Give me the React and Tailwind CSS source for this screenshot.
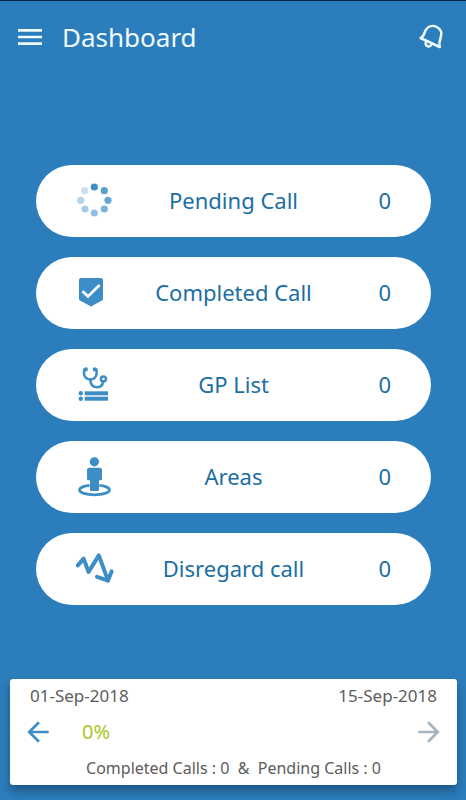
import { MdArrowBack, MdArrowForward, MdMenu } from 'react-icons/md'

function BellIcon() {
  return (
    <svg className="size-8" viewBox="0 0 32 32" fill="none" stroke="currentColor" strokeWidth="2.5" strokeLinecap="round" strokeLinejoin="round">
      <path d="M4.6 17L23.6 26" />
      <path d="M5 16.8C8.6 14.8 8 11.8 9.8 9C12.4 4.8 17 4 20.8 6C25 8.2 26.2 12.4 24.6 16.8C23.4 20 22.8 22 23.6 25.8" />
      <path d="M9.8 20.8C9.2 23.2 10 24.9 11.8 25.4C13.6 25.9 14.9 25 15.6 23.4" strokeWidth="2.2" />
    </svg>
  )
}

function PendingIcon() {
  return (
    <svg className="size-10" viewBox="0 0 40 40" fill="currentColor">
      <circle cx="18.3" cy="6" r="3.6" />
      <circle cx="28.3" cy="9.7" r="3.6" opacity="0.85" />
      <circle cx="32" cy="19.3" r="3.6" opacity="0.78" />
      <circle cx="28.3" cy="28" r="3.6" opacity="0.68" />
      <circle cx="18.3" cy="32" r="3.6" opacity="0.55" />
      <circle cx="9" cy="28" r="3.6" opacity="0.46" />
      <circle cx="4.7" cy="19.3" r="3.6" opacity="0.38" />
      <circle cx="8.7" cy="9.7" r="3.6" opacity="0.28" />
    </svg>
  )
}

function CompletedIcon() {
  return (
    <svg className="size-10" viewBox="0 0 40 40" fill="none">
      <path d="M5 5H25A2 2 0 0 1 27 7V26Q27 27 26 27.6L15 33.4L4 27.6Q3 27 3 26V7A2 2 0 0 1 5 5Z" fill="currentColor" />
      <path d="M6.4 18.2L12 23.4L23.6 12" stroke="white" strokeWidth="2.8" />
    </svg>
  )
}

function DoctorListIcon() {
  return (
    <svg className="size-10" viewBox="0 0 40 40" fill="none" stroke="currentColor" strokeWidth="2.5" strokeLinecap="round">
      <path d="M9.8 4.2H9Q8 4.2 8 5.4V8.4C8 12 11 14.6 14.3 14.6C17.6 14.6 20.6 12 20.6 8.4V5.4Q20.6 4.2 19.6 4.2H18.8" />
      <circle cx="9.8" cy="4.4" r="0.9" />
      <circle cx="18.8" cy="4.4" r="0.9" />
      <path d="M14.3 14.6C14.3 19.6 17 22.2 20.8 22.2C24.6 22.2 26.8 20 27 16.6" />
      <circle cx="27.4" cy="14" r="2.5" />
      <g fill="currentColor" stroke="none">
        <circle cx="4.8" cy="28.3" r="2.2" />
        <circle cx="4.8" cy="33.7" r="2.2" />
        <rect x="8.7" y="26.3" width="23.3" height="4" />
        <rect x="8.7" y="31.7" width="23.3" height="4" />
      </g>
    </svg>
  )
}

function AreasIcon() {
  return (
    <svg className="size-10" viewBox="0 0 40 40" fill="currentColor">
      <circle cx="18.4" cy="4.8" r="4.6" />
      <path d="M13.5 10.7H23.5A2.5 2.5 0 0 1 26 13.2V21.8A1.5 1.5 0 0 1 24.5 23.3H23V33A1 1 0 0 1 22 34H15A1 1 0 0 1 14 33V23.3H12.5A1.5 1.5 0 0 1 11 21.8V13.2A2.5 2.5 0 0 1 13.5 10.7Z" />
      <path d="M13.6 28.4C7.6 29 3.5 30.8 3.5 33C3.5 35.8 10 37.8 18.5 37.8S33.5 35.8 33.5 33C33.5 30.8 29.4 29 23.4 28.4" fill="none" stroke="currentColor" strokeWidth="2.8" />
    </svg>
  )
}

function DisregardIcon() {
  return (
    <svg className="size-10" viewBox="0 0 40 40" fill="none" stroke="currentColor" strokeWidth="4" strokeLinecap="round" strokeLinejoin="round">
      <path d="M1.8 16.4L7.6 9.6L12.6 23L22.8 6.4L32 31.4" />
      <path d="M21 27.8L32 31.6L35.6 22.4" />
    </svg>
  )
}

const items = [
  { label: 'Pending Call', count: 0, icon: PendingIcon },
  { label: 'Completed Call', count: 0, icon: CompletedIcon },
  { label: 'GP List', count: 0, icon: DoctorListIcon },
  { label: 'Areas', count: 0, icon: AreasIcon },
  { label: 'Disregard call', count: 0, icon: DisregardIcon },
]

export default function App() {
  return (
    <div className="flex min-h-screen flex-col border-t border-[#0b2340] bg-[#2b7dbb] font-['Noto_Sans',sans-serif]">
      <header className="flex h-18 items-center gap-4 px-3.5 text-[#f0fbff]">
        <button aria-label="Open menu">
          <MdMenu className="size-8" />
        </button>
        <h1 className="flex-1 text-[26px] leading-8">Dashboard</h1>
        <button aria-label="Notifications" className="mr-1">
          <BellIcon />
        </button>
      </header>

      <main className="flex flex-1 flex-col justify-center gap-5 pt-[18px] pr-[35px] pl-9">
        {items.map(({ label, count, icon: Icon }) => (
          <button
            key={label}
            className="grid h-18 grid-cols-[96px_1fr_96px] items-center rounded-full bg-white text-[22px] leading-8 text-[#1b6ea3]"
          >
            <span className="pl-10 text-[#3d8dc6]">
              <Icon />
            </span>
            <span className="pb-0.5 text-center whitespace-nowrap">{label}</span>
            <span className="pr-10 pb-0.5 text-right">{count}</span>
          </button>
        ))}
      </main>

      <section className="mr-[9px] mb-[15px] ml-2.5 flex flex-col gap-2 rounded-[3px] bg-white py-[5px] text-[16px] leading-6 text-[#5c5c5c] shadow-[0_6px_10px_rgba(0,0,0,0.3)]">
        <div className="flex justify-between px-5 text-[17px] leading-6">
          <span>01-Sep-2018</span>
          <span>15-Sep-2018</span>
        </div>
        <div className="flex items-center px-3">
          <button aria-label="Previous period" className="text-[#3d8dc6]">
            <MdArrowBack className="size-8" />
          </button>
          <span className="flex-1 pl-7 text-[20px] leading-8 text-[#a9c81e]">0%</span>
          <button aria-label="Next period" className="text-[#a5b4be]">
            <MdArrowForward className="size-8" />
          </button>
        </div>
        <p className="text-center whitespace-pre">{'Completed Calls : 0  &  Pending Calls : 0'}</p>
      </section>
    </div>
  )
}
